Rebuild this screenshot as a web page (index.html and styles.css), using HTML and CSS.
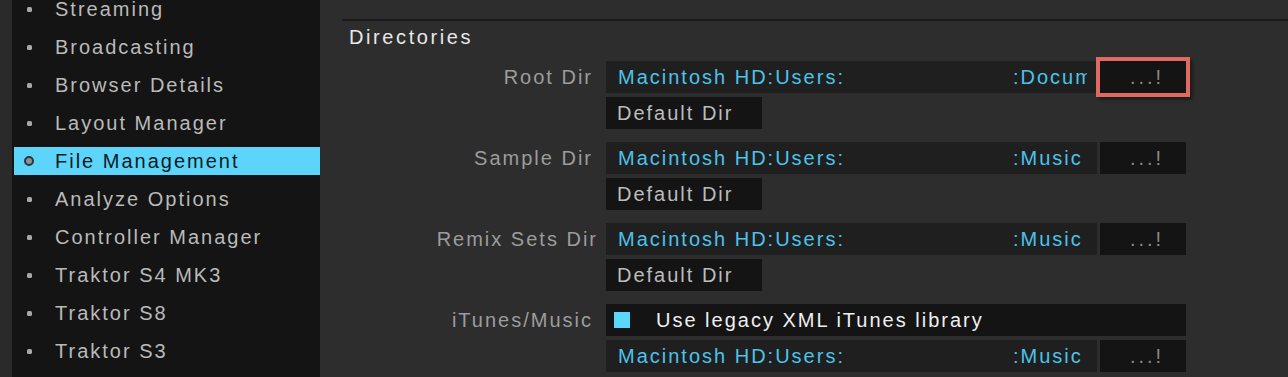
FILE: index.html
```html
<!DOCTYPE html>
<html>
<head>
<meta charset="utf-8">
<link rel="stylesheet" href="styles.css">
</head>
<body>
<div class="app">
  <div class="edge"></div>
  <nav class="sidebar">
    <ul class="menu">
      <li class="item"><span class="bullet"></span><span class="label">Streaming</span></li>
      <li class="item"><span class="bullet"></span><span class="label">Broadcasting</span></li>
      <li class="item"><span class="bullet"></span><span class="label">Browser Details</span></li>
      <li class="item"><span class="bullet"></span><span class="label">Layout Manager</span></li>
      <li class="item selected"><span class="bullet"></span><span class="label">File Management</span></li>
      <li class="item"><span class="bullet"></span><span class="label">Analyze Options</span></li>
      <li class="item"><span class="bullet"></span><span class="label">Controller Manager</span></li>
      <li class="item"><span class="bullet"></span><span class="label">Traktor S4 MK3</span></li>
      <li class="item"><span class="bullet"></span><span class="label">Traktor S8</span></li>
      <li class="item"><span class="bullet"></span><span class="label">Traktor S3</span></li>
    </ul>
  </nav>
  <main class="panel">
    <section class="section">
      <h2 class="section-title">Directories</h2>
      <div class="form">
        <div class="group">
          <div class="field-label">Root Dir</div>
          <div class="controls">
            <div class="line">
              <div class="path"><div class="path-text"><span class="path-head">Macintosh HD:Users:</span><span class="path-tail">:Documents:Native Instruments:</span></div></div>
              <div class="browse highlighted">...!</div>
            </div>
            <div class="default-btn">Default Dir</div>
          </div>
        </div>
        <div class="group">
          <div class="field-label">Sample Dir</div>
          <div class="controls">
            <div class="line">
              <div class="path"><div class="path-text"><span class="path-head">Macintosh HD:Users:</span><span class="path-tail">:Music</span></div></div>
              <div class="browse">...!</div>
            </div>
            <div class="default-btn">Default Dir</div>
          </div>
        </div>
        <div class="group">
          <div class="field-label wide">Remix Sets Dir</div>
          <div class="controls">
            <div class="line">
              <div class="path"><div class="path-text"><span class="path-head">Macintosh HD:Users:</span><span class="path-tail">:Music</span></div></div>
              <div class="browse">...!</div>
            </div>
            <div class="default-btn">Default Dir</div>
          </div>
        </div>
        <div class="group">
          <div class="field-label">iTunes/Music</div>
          <div class="controls">
            <div class="check-row"><span class="checkbox"></span><span class="check-text">Use legacy XML iTunes library</span></div>
            <div class="line">
              <div class="path"><div class="path-text"><span class="path-head">Macintosh HD:Users:</span><span class="path-tail">:Music</span></div></div>
              <div class="browse">...!</div>
            </div>
          </div>
        </div>
      </div>
    </section>
  </main>
</div>
</body>
</html>
```

FILE: styles.css
```css
* { box-sizing: border-box; }
html, body { margin: 0; padding: 0; }
body {
  width: 1288px;
  height: 377px;
  overflow: hidden;
  background: #2d2d2d;
  font-family: "Liberation Sans", Arial, sans-serif;
  font-size: 20px;
  letter-spacing: 2px;
}
.app {
  display: flex;
  height: 377px;
}
.edge {
  width: 12px;
  background: #2a2a2a;
  flex: none;
}
.sidebar {
  width: 308px;
  flex: none;
  background: #141414;
  overflow: hidden;
}
.menu {
  list-style: none;
  margin: -5px 0 0 0;
  padding: 0 0 0 2px;
}
.item {
  display: flex;
  align-items: center;
  height: 28px;
  margin-bottom: 10px;
  color: #bababa;
  line-height: 28px;
}
.bullet {
  width: 5px;
  height: 5px;
  margin-left: 13px;
  margin-right: 23px;
  border-radius: 1.5px;
  background: #a8a8a8;
  flex: none;
}
.label { white-space: nowrap; }
.item.selected {
  background: #5dd5fb;
  color: #0c1a20;
}
.item.selected .bullet {
  width: 10px;
  height: 10px;
  margin-left: 10px;
  margin-right: 21px;
  border-radius: 50%;
  background: #8a9296;
  border: 2px solid #2c3539;
}
.panel {
  flex: 1;
  padding: 19px 0 0 22px;
}
.section {
  border-top: 2px solid #1b1b1b;
}
.section-title {
  margin: 0;
  padding: 4px 0 0 7px;
  font-size: 20px;
  font-weight: normal;
  line-height: 24px;
  letter-spacing: 2.6px;
  color: #e8e8e8;
}
.form {
  margin-top: 12px;
  display: flex;
  flex-direction: column;
  gap: 13px;
}
.group {
  display: flex;
  gap: 13px;
}
.field-label {
  width: 251px;
  height: 32px;
  line-height: 32px;
  text-align: right;
  color: #9c9c9c;
  white-space: nowrap;
}
.field-label.wide { width: 256px; }
.field-label.wide + .controls { margin-left: -5px; }
.controls {
  width: 580px;
  display: flex;
  flex-direction: column;
  gap: 4px;
}
.line {
  display: flex;
  gap: 3px;
  height: 32px;
}
.path {
  width: 491px;
  height: 32px;
  background: #1f1f1f;
  padding: 0 10px 0 12px;
  display: flex;
}
.path-text {
  flex: 1;
  overflow: hidden;
  white-space: nowrap;
  line-height: 32px;
  color: #4cc3ea;
}
.path-head {
  display: inline-block;
  width: 395px;
}
.browse {
  width: 86px;
  height: 32px;
  background: #141414;
  color: #8a8a8a;
  line-height: 32px;
  text-align: center;
  letter-spacing: 3px;
  padding-left: 8px;
}
.browse.highlighted {
  outline: 4px solid #df6a5f;
  box-shadow: 3px 3px 3px 4px rgba(0,0,0,0.35);
}
.default-btn {
  width: 156px;
  height: 32px;
  background: #141414;
  color: #bcbcbc;
  line-height: 32px;
  padding-left: 11px;
  white-space: nowrap;
}
.check-row {
  height: 32px;
  background: #141414;
  display: flex;
  align-items: center;
  padding-left: 8px;
}
.checkbox {
  width: 16px;
  height: 16px;
  background: #5ad6ff;
  flex: none;
  margin-right: 26px;
}
.check-text {
  color: #efefef;
  white-space: nowrap;
}
```
